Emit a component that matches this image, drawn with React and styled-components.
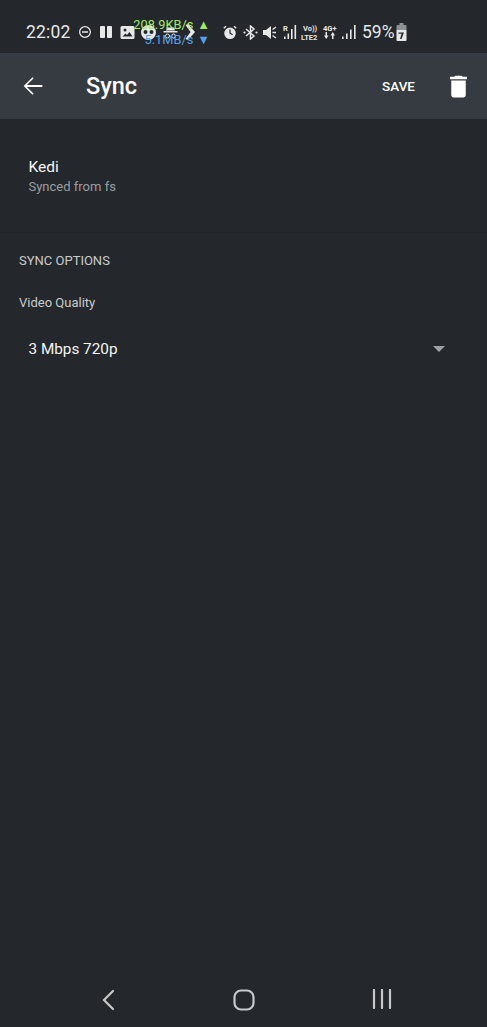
import styled, { createGlobalStyle } from "styled-components";

const GlobalStyle = createGlobalStyle`
  html, body {
    margin: 0;
    padding: 0;
    background: #24282c;
  }
  * {
    box-sizing: border-box;
  }
`;

const Page = styled.div`
  width: 487px;
  height: 1027px;
  display: flex;
  flex-direction: column;
  background: #24282c;
  font-family: "Roboto", sans-serif;
  overflow: hidden;
`;

const StatusBar = styled.div`
  position: relative;
  height: 53px;
  flex: none;
  display: flex;
  align-items: center;
  padding: 11px 0 0 26px;
  color: #e6e7e8;
`;

const Clock = styled.span`
  font-size: 17.5px;
  width: 52px;
  letter-spacing: 0.2px;
`;

const StatusIcon = styled.svg`
  flex: none;
  display: block;
  margin-right: ${(p) => p.$gap ?? 0}px;
  fill: #e6e7e8;
`;

const Speeds = styled.div`
  position: absolute;
  left: 130px;
  top: 17px;
  width: 80px;
  display: flex;
  flex-direction: column;
  font-size: 12.8px;
  line-height: 15px;
`;

const Speed = styled.span`
  display: flex;
  justify-content: flex-end;
  gap: 4px;
  color: ${(p) => p.$color};
  white-space: nowrap;
`;

const Battery = styled.span`
  font-size: 17.5px;
  width: 34px;
`;

const Toolbar = styled.header`
  height: 66px;
  flex: none;
  display: flex;
  align-items: center;
  padding: 0 14px 0 19px;
  background: #363b42;
  color: #fff;
`;

const BackButton = styled.svg`
  flex: none;
  margin-right: 39px;
`;

const Title = styled.h1`
  flex: 1;
  margin: 0;
  font-size: 23.5px;
  font-weight: 500;
`;

const SaveButton = styled.span`
  font-size: 13.5px;
  font-weight: 500;
  margin-right: 29px;
`;

const SyncItem = styled.div`
  height: 114px;
  flex: none;
  padding: 38px 28.5px 0;
  border-bottom: 1px solid #212529;
`;

const ItemName = styled.div`
  font-size: 15.5px;
  line-height: 20px;
  color: #f4f4f4;
`;

const ItemSummary = styled.div`
  margin-top: 1px;
  font-size: 13px;
  line-height: 18px;
  color: #9a9da0;
`;

const Options = styled.section`
  flex: 1;
  padding: 20px 19px 0;
`;

const SectionTitle = styled.div`
  font-size: 13px;
  line-height: 16px;
  color: #c9cbcd;
`;

const FieldLabel = styled.div`
  margin-top: 26px;
  font-size: 13px;
  line-height: 16px;
  color: #c9cbcd;
`;

const Select = styled.div`
  display: flex;
  align-items: center;
  justify-content: space-between;
  margin-top: 26px;
  padding: 0 23px 0 9.5px;
  height: 24px;
  font-size: 15.3px;
  color: #f4f4f4;
`;

const Caret = styled.span`
  width: 0;
  height: 0;
  border-left: 6px solid transparent;
  border-right: 6px solid transparent;
  border-top: 6px solid #9fa2a5;
`;

const NavBar = styled.nav`
  height: 56px;
  flex: none;
  display: flex;
  align-items: flex-start;
  justify-content: space-between;
  padding: 18px 95px 0 101px;
`;

const App = () => {
  return (
    <Page>
      <GlobalStyle />
      <StatusBar>
        <Clock>22:02</Clock>
        <StatusIcon $gap={7} width="14" height="14" viewBox="0 0 14 14">
          <path d="M7 1a6 6 0 1 0 0 12A6 6 0 0 0 7 1Zm0 1.300a4.700 4.700 0 1 1 0 9.400 4.700 4.700 0 0 1 0-9.400ZM4 6.300h6v1.400H4Z" fillRule="evenodd" />
        </StatusIcon>
        <StatusIcon $gap={7} width="14" height="14" viewBox="0 0 14 14">
          <rect x="1" y="1" width="5" height="12" rx="1" />
          <rect x="8" y="1" width="5" height="12" rx="1" />
        </StatusIcon>
        <StatusIcon $gap={5} width="15" height="15" viewBox="0 0 15 15">
          <path d="M2 1h11a1.500 1.500 0 0 1 1.500 1.500v10A1.500 1.500 0 0 1 13 14H2a1.500 1.500 0 0 1-1.500-1.500v-10A1.500 1.500 0 0 1 2 1Zm.5 10.500h10L9.500 7l-2.500 3-1.500-1.500ZM5 3.500a1.500 1.500 0 1 0 0 3 1.500 1.500 0 0 0 0-3Z" fillRule="evenodd" />
        </StatusIcon>
        <StatusIcon $gap={6} width="17" height="17" viewBox="0 0 17 17">
          <path d="M8.500 1a7.500 7.500 0 1 0 0 15 7.500 7.500 0 0 0 0-15Zm-3 5a2 2 0 1 1 0 4 2 2 0 0 1 0-4Zm6 0a2 2 0 1 1 0 4 2 2 0 0 1 0-4Z" fillRule="evenodd" />
        </StatusIcon>
        <StatusIcon $gap={7} width="15" height="15" viewBox="0 0 15 15">
          <path d="M4 2.500h7l1 3H3ZM.5 6h14v1.500H.5Z" />
          <circle cx="4.500" cy="11" r="2" fill="none" stroke="#e6e7e8" />
          <circle cx="10.500" cy="11" r="2" fill="none" stroke="#e6e7e8" />
        </StatusIcon>
        <StatusIcon $gap={28} width="10" height="16" viewBox="0 0 10 16">
          <path d="M3 0 10 8l-7 8-2.500-1 5-7-5-7Z" />
        </StatusIcon>
        <StatusIcon $gap={6} width="14" height="15" viewBox="0 0 14 15">
          <path d="M7 2.500a5.800 5.800 0 1 0 0 11.600A5.800 5.800 0 0 0 7 2.500Zm-.6 2h1.200v3.300l2.300 1.400-.6 1-2.900-1.800ZM2.600.7.300 2.700l.9 1 2.300-2Zm8.800 0 2.300 2-.9 1-2.300-2Z" fillRule="evenodd" />
        </StatusIcon>
        <StatusIcon $gap={5} width="15" height="15" viewBox="0 0 15 15">
          <path d="M3 4l8 7-3.500 3V1L11 4l-8 7" fill="none" stroke="#e6e7e8" strokeWidth="1.500" />
          <circle cx="1.500" cy="7.500" r="1.100" />
          <circle cx="13.500" cy="7.500" r="1.100" />
        </StatusIcon>
        <StatusIcon $gap={6} width="14" height="15" viewBox="0 0 14 15">
          <path d="M0 5h3l5-4v13l-5-4H0Z" />
          <path d="M9.500 4.500 13 2M9.500 7.500H13M9.500 10.500 13 13" stroke="#e6e7e8" strokeWidth="1.400" />
        </StatusIcon>
        <StatusIcon $gap={4} width="14" height="16" viewBox="0 0 14 16">
          <text x="0" y="6.500" fontSize="7.500" fontWeight="700" fontFamily="Roboto, sans-serif">R</text>
          <rect x="1" y="12.500" width="1.600" height="2.500" />
          <rect x="4.500" y="9.500" width="1.600" height="5.500" />
          <rect x="8" y="5" width="1.600" height="10" />
          <rect x="11.500" y="1" width="1.600" height="14" />
        </StatusIcon>
        <StatusIcon $gap={3} width="19" height="17" viewBox="0 0 19 17">
          <text x="2" y="7" fontSize="7.500" fontWeight="700" fontFamily="Roboto, sans-serif">Vo))</text>
          <text x="0" y="15.500" fontSize="7.500" fontWeight="700" fontFamily="Roboto, sans-serif">LTE2</text>
        </StatusIcon>
        <StatusIcon $gap={4} width="15" height="16" viewBox="0 0 15 16">
          <text x="0" y="6.500" fontSize="7.500" fontWeight="700" fontFamily="Roboto, sans-serif">4G+</text>
          <path d="M2.500 8h1.500v3.500h1.500L3.250 15 1 11.500h1.500ZM10.500 15H9v-3.500H7.500L9.750 8 12 11.500h-1.500Z" />
        </StatusIcon>
        <StatusIcon $gap={6} width="14" height="14" viewBox="0 0 14 14">
          <rect x="0" y="11.500" width="1.600" height="2.500" />
          <rect x="4" y="8.500" width="1.600" height="5.500" />
          <rect x="8" y="4.500" width="1.600" height="9.500" />
          <rect x="12" y="0" width="1.600" height="14" />
        </StatusIcon>
        <Battery>59%</Battery>
        <StatusIcon width="11" height="18" viewBox="0 0 11 18">
          <path d="M3.500 0h4v2h-4Z" opacity="0.55" />
          <path d="M1.500 2h8a1 1 0 0 1 1 1v4H.5V3a1 1 0 0 1 1-1Z" opacity="0.55" />
          <path d="M.5 7h10v10a1 1 0 0 1-1 1h-8a1 1 0 0 1-1-1Zm2 2.500v1.200h3L4 16l1.500 0L8 9.500Z" fillRule="evenodd" />
        </StatusIcon>
        <Speeds>
          <Speed $color="#9fe86a">208.9KB/s <span>▲</span></Speed>
          <Speed $color="#559fe8">5.1MB/s <span>▼</span></Speed>
        </Speeds>
      </StatusBar>

      <Toolbar>
        <BackButton width="28" height="28" viewBox="0 0 24 24">
          <path d="M20 11.200H6.800l5.800-5.800-1-1L4 12l7.600 7.600 1-1-5.800-5.800H20Z" fill="#fff" />
        </BackButton>
        <Title>Sync</Title>
        <SaveButton>SAVE</SaveButton>
        <svg width="29" height="29" viewBox="0 0 24 24">
          <path d="M6 19c0 1.100.9 2 2 2h8c1.100 0 2-.9 2-2V7H6ZM19 4h-3.500l-1-1h-5l-1 1H5v2h14Z" fill="#fff" />
        </svg>
      </Toolbar>

      <SyncItem>
        <ItemName>Kedi</ItemName>
        <ItemSummary>Synced from fs</ItemSummary>
      </SyncItem>

      <Options>
        <SectionTitle>SYNC OPTIONS</SectionTitle>
        <FieldLabel>Video Quality</FieldLabel>
        <Select>
          3 Mbps 720p
          <Caret />
        </Select>
      </Options>

      <NavBar>
        <svg width="14" height="22" viewBox="0 0 14 22">
          <path d="M12 2 3 11l9 9" fill="none" stroke="#c6c8ca" strokeWidth="2.200" strokeLinecap="round" />
        </svg>
        <svg width="22" height="22" viewBox="0 0 22 22">
          <rect x="1.500" y="1.500" width="19" height="19" rx="6.500" fill="none" stroke="#c6c8ca" strokeWidth="2.200" />
        </svg>
        <svg width="20" height="20" viewBox="0 0 20 20">
          <path d="M2 1v18M10 1v18M18 1v18" stroke="#c6c8ca" strokeWidth="2.200" strokeLinecap="round" />
        </svg>
      </NavBar>
    </Page>
  );
};

export default App;
